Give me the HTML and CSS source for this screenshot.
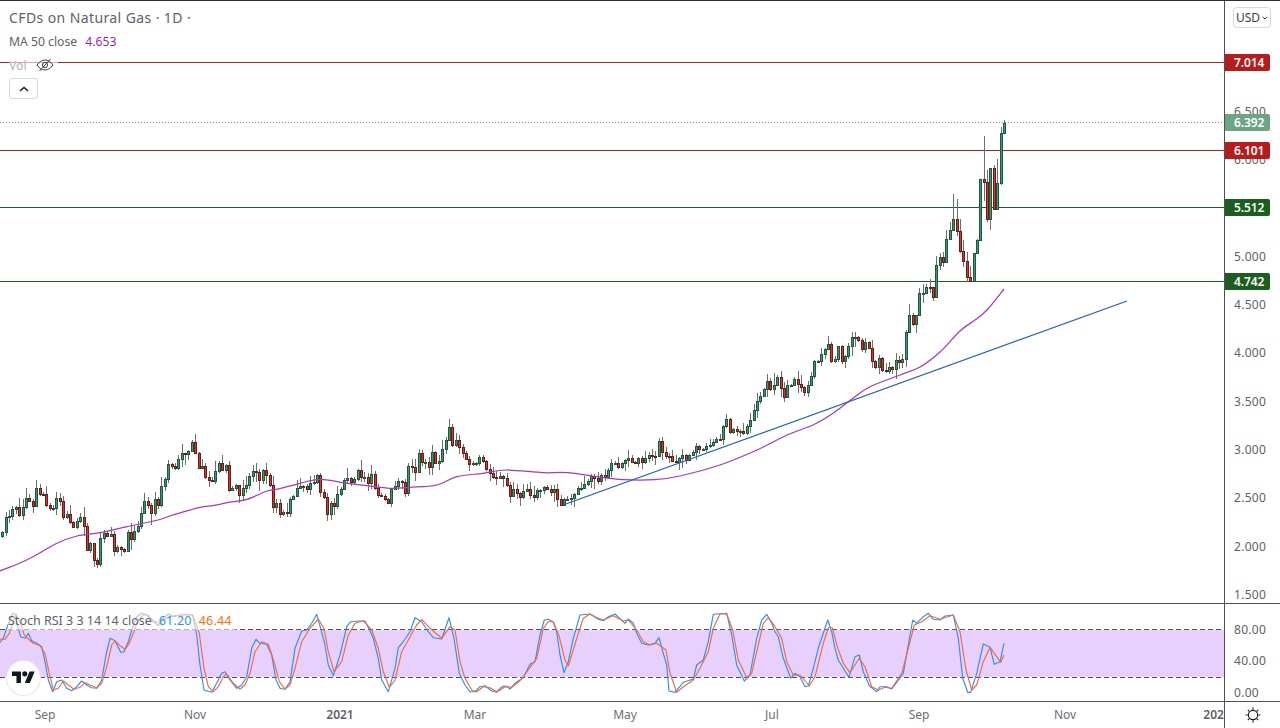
FILE: index.html
```html
<!DOCTYPE html>
<html lang="en">
<head>
<meta charset="utf-8">
<title>CFDs on Natural Gas · 1D</title>
<link rel="stylesheet" href="styles.css">
</head>
<body>
<div class="chart">
  <section class="pane pane-main">
    <svg class="plot" id="main-plot" viewBox="0 1 1224 602" width="1224" height="602" aria-label="Price chart">
      <line class="hline hline-red" x1="0" x2="1224" y1="62.5" y2="62.5"/>
      <line class="hline hline-red" x1="0" x2="1224" y1="150.5" y2="150.5"/>
      <line class="hline hline-green" x1="0" x2="1224" y1="207.5" y2="207.5"/>
      <line class="hline hline-green" x1="0" x2="1224" y1="281.5" y2="281.5"/>
      <line class="last-price" x1="0" x2="1224" y1="122.5" y2="122.5"/>
      <g id="candles"></g>
      <path class="ma" id="ma-line" d=""/>
      <line class="trend" x1="563" y1="505" x2="1127" y2="301"/>
    </svg>
    <div class="legend">
      <div class="legend-title">CFDs on Natural Gas · 1D ·</div>
      <div class="legend-row"><span>MA 50 close</span><span class="val-ma">4.653</span></div>
      <div class="legend-row legend-vol">
        <span>Vol</span>
        <svg class="eye" viewBox="0 0 18 14" width="18" height="14" aria-hidden="true">
          <path d="M1 7c2-3 5-5 8-5s6 2 8 5c-2 3-5 5-8 5S3 10 1 7z"/>
          <circle cx="9" cy="7" r="2.6"/>
          <path d="M3.5 13 14.5 1"/>
        </svg>
      </div>
      <button class="collapse" type="button" aria-label="Collapse legend">
        <svg viewBox="0 0 10 6" width="10" height="6" aria-hidden="true"><path d="M1 5l4-3.5L9 5"/></svg>
      </button>
    </div>
  </section>
  <aside class="scale scale-main">
    <button class="currency" type="button">USD<svg viewBox="0 0 6 4" width="6" height="4" aria-hidden="true"><path d="M.7.8 3 3 5.3.8"/></svg></button>
    <ul class="ticks">
      <li>6.500</li><li>6.000</li><li>5.500</li><li>5.000</li><li>4.500</li>
      <li>4.000</li><li>3.500</li><li>3.000</li><li>2.500</li><li>2.000</li><li>1.500</li>
    </ul>
    <span class="tag tag-red tag-7014">7.014</span>
    <span class="tag tag-last tag-6392">6.392</span>
    <span class="tag tag-red tag-6101">6.101</span>
    <span class="tag tag-green tag-5512">5.512</span>
    <span class="tag tag-green tag-4742">4.742</span>
  </aside>

  <section class="pane pane-osc">
    <svg class="plot" viewBox="0 604 1224 97" width="1224" height="97" aria-label="Stochastic RSI">
      <rect class="band" x="0" y="630" width="1224" height="47"/>
      <line class="guide" x1="0" x2="1224" y1="629.5" y2="629.5"/>
      <line class="guide" x1="0" x2="1224" y1="677.5" y2="677.5"/>
      <polyline class="stoch stoch-k" id="stoch-k" points=""/>
      <polyline class="stoch stoch-d" id="stoch-d" points=""/>
    </svg>
    <div class="osc-legend"><span>Stoch RSI 3 3 14 14 close</span><span class="val-k">61.20</span><span class="val-d">46.44</span></div>
    <div class="logo">
      <svg viewBox="0 0 36 28" width="23" height="18" aria-hidden="true">
        <path d="M14 22H7V11H0V4h14v18zM28 22h-8l7.5-18h8L28 22z"/>
        <circle cx="20" cy="7.5" r="4"/>
      </svg>
    </div>
  </section>
  <aside class="scale scale-osc">
    <ul class="ticks-osc"><li>80.00</li><li>40.00</li><li>0.00</li></ul>
  </aside>

  <footer class="time-axis">
    <span>Sep</span><span>Nov</span><span class="strong">2021</span><span>Mar</span><span>May</span><span>Jul</span><span>Sep</span><span>Nov</span><span class="strong">2022</span>
  </footer>
  <div class="settings">
    <svg viewBox="0 0 16 16" width="16" height="16" aria-hidden="true">
      <circle cx="8" cy="8" r="4.6"/>
      <path d="M8 .6v2.2M8 13.2v2.2M.6 8h2.2M13.2 8h2.2M2.8 2.8l1.5 1.5M11.7 11.7l1.5 1.5M13.2 2.8l-1.5 1.5M4.3 11.7l-1.5 1.5"/>
    </svg>
  </div>
</div>
<script src="chart.js"></script>
</body>
</html>
```
FILE: styles.css
```css
* { box-sizing: border-box; }
html, body { margin: 0; padding: 0; background: #fff; }
body {
  width: 1280px;
  height: 728px;
  overflow: hidden;
  font-family: "Noto Sans", "Open Sans", sans-serif;
  color: #5d606b;
}
ul { list-style: none; margin: 0; padding: 0; }

.chart {
  display: grid;
  grid-template-columns: 1224px 56px;
  grid-template-rows: 602px 97px 26px;
  row-gap: 1px;
  width: 1280px;
  height: 728px;
  border-top: 1px solid #2a2e39;
  background: #505050;
}

.pane { position: relative; overflow: hidden; background: #fff; }
.plot { display: block; }

.hline { stroke-width: 1; shape-rendering: crispEdges; }
.hline-red { stroke: #b71c1c; }
.hline-green { stroke: #1b5e20; }
.last-price { stroke: #6ba583; stroke-width: 1; stroke-dasharray: 1 2; shape-rendering: crispEdges; }
.trend { stroke: #1f5fbf; stroke-width: 1.2; }
.ma { fill: none; stroke: #a63ab8; stroke-width: 1.25; }

.wick { stroke: #6e6e6e; stroke-width: 1; shape-rendering: crispEdges; }
.body { stroke-width: 1; shape-rendering: crispEdges; }
.up { fill: #3d9970; stroke: #1d5a3c; }
.down { fill: #d9362b; stroke: #6e1a15; }

.legend {
  position: absolute;
  left: 9px;
  top: 7px;
  display: flex;
  flex-direction: column;
  align-items: flex-start;
}
.legend-title { font-size: 14px; line-height: 19px; height: 20px; letter-spacing: .4px; color: #5d606b; }
.legend-row {
  display: flex;
  align-items: center;
  gap: 8px;
  margin-top: 4px;
  font-size: 12.2px;
  line-height: 17px;
  height: 18px;
}
.val-ma { color: #9c27b0; }
.legend-vol {
  margin-top: 6px;
  color: #b2b5be;
  background: rgba(255, 255, 255, .6);
  gap: 9px;
  padding-right: 4px;
}
.eye { fill: none; stroke: #3b3e48; stroke-width: 1; }
.collapse {
  margin-top: 4px;
  width: 29px;
  height: 21px;
  padding: 0;
  display: flex;
  align-items: center;
  justify-content: center;
  border: 1px solid #d6d8e0;
  border-radius: 3px;
  background: #fff;
}
.collapse svg { fill: none; stroke: #131722; stroke-width: 1.4; }

.scale { position: relative; border-left: 1px solid #505050; overflow: hidden; background: #fff; }
.currency {
  position: absolute;
  left: 8px;
  top: 6px;
  width: 38px;
  height: 21px;
  padding: 0;
  display: flex;
  align-items: center;
  justify-content: center;
  gap: 2px;
  border: 1px solid #d6d8e0;
  border-radius: 4px;
  background: #fff;
  font: 12px "Noto Sans", sans-serif;
  color: #3b3e48;
}
.currency svg { fill: none; stroke: #3b3e48; stroke-width: 1; }
.ticks { padding: 87px 0 0 9px; font-size: 12px; color: #5d606b; }
.ticks li { height: 48.3px; line-height: 48.3px; letter-spacing: .3px; }

.tag {
  position: absolute;
  left: 0;
  width: 45px;
  height: 17px;
  line-height: 18px;
  padding-left: 9px;
  border-radius: 0 2px 2px 0;
  font-size: 12px;
  font-weight: 600;
  color: #fff;
  letter-spacing: -.1px;
}
.tag-red { background: #b71c1c; }
.tag-green { background: #1b5e20; }
.tag-last { background: #6ba583; }
.tag-7014 { top: 53px; }
.tag-6392 { top: 113px; }
.tag-6101 { top: 141px; }
.tag-5512 { top: 198px; }
.tag-4742 { top: 272px; }

.band { fill: #e8d0fc; }
.guide { stroke: #555; stroke-width: 1; stroke-dasharray: 5 3; shape-rendering: crispEdges; }
.stoch { fill: none; stroke-width: 1.15; stroke-linejoin: round; }
.stoch-k { stroke: #2e8fee; }
.stoch-d { stroke: #f4693a; }

.osc-legend {
  position: absolute;
  left: 8px;
  top: 8px;
  display: flex;
  gap: 7px;
  height: 18px;
  line-height: 18px;
  font-size: 12.5px;
  padding-right: 4px;
  background: rgba(255, 255, 255, .55);
}
.val-k { color: #2196f3; letter-spacing: .2px; }
.val-d { color: #ff6d00; letter-spacing: .2px; }
.logo {
  position: absolute;
  left: 7px;
  top: 57px;
  width: 33px;
  height: 34px;
  display: flex;
  align-items: center;
  justify-content: center;
  border-radius: 50%;
  background: #fff;
  box-shadow: 0 0 0 1px #e6e7ec;
}
.logo svg { fill: #131722; }

.ticks-osc { padding: 17px 0 0 9px; font-size: 12px; color: #5d606b; }
.ticks-osc li { height: 31px; line-height: 17px; letter-spacing: .3px; }
.ticks-osc li:nth-child(2) { height: 32px; }

.time-axis {
  display: grid;
  grid-template-columns: 90px 210px 80px 190px 110px 184px 110px 182px 122px;
  overflow: hidden;
  font-size: 12px;
  line-height: 26px;
  color: #6a6d78;
  white-space: nowrap;
  background: #fff;
}
.time-axis span { text-align: center; }
.time-axis .strong { font-weight: 600; color: #5d606b; }
.settings {
  display: flex;
  align-items: center;
  justify-content: center;
  border-left: 1px solid #505050;
  background: #fff;
}
.settings svg { fill: none; stroke: #131722; stroke-width: 1.1; }
```
FILE: chart.js
```js
// Bars are listed as closes, each opening at the previous close.
// A bar is a close, or [close, high, low]. Every run of bars is [top, values],
// where a value v maps to the pixel row top + v / 3.
const START_Y = 430 + 317 / 3;
const BAR_STEP = 3.384;
const FIRST_X = 2.3;

const runs = [
  [430, [305, 262, 258, 238, 232, 254, 230, 205, 212, 227, 175, 191, 193, 224, 233, 233, 205, 212, 262, 253, 276, 292, 274, 260, 287, 361, 340, [391, 340, 410], [401, 385, 415], 325, 310, 317, 311, 364, 350, 358, 364, 305, 328, 302, 287, 250, [214, 190, 250], 226, 248, 208, 226, 169, 146, 103, 109, 115, 88, 70, [73, 70, 105], 62, [37, 30, 62], 70, 115, 109, 142, 150, 152, 124, 100, [119, 75, 119], 106, 181, 175, 166, [196, 166, 218], 175, 164, 139, 124, 127, 149, 121, 136, 166, 232, 220, 253, 247, 250, 208, 199, 175]],
  [410, [228, 228, 236, 218, 216, 195, 245, 262, 312, 280, 287, 252, 238, 211, 205, 215, 208, 180, [200, 150, 215], 200, 218, 193, 233, 254, 257, 266, 278, 238, 229, 214, 215, 250, 168, 172, 185, [129, 118, 185], 155, 155, 172, [127, 105, 195], 160, 152, 118, 91, [52, 27, 91], 104, 91, 112, 130, 148, 161, 160, 160, 142, 154, 176, 190, 202, 205, 197, 203, 224, 257, 238, 250, 262, 244, 238, 256, 260, 241, 241, 232, 238, 245, 236, 268, 284, 268, 267, 264, 253, 235, 235, 223, 214, 199, 203, 212]],
  [320, [465, 472, 450, 429, 428, 441, 430, 421, 414, 425, 428, 415, 425, 415, 406, 407, 408, [363, 353, 409], 395, 407, 409, 423, 426, 414, 406, 421, 406, 396, 379, 387, 387, 378, 376, 367, 357, 358, 319, 297, 335, 328, 334, 333, 338, 319, 300, 271, 244, 229, 208, [183, 162, 230], 206, [196, 160, 225], 172, 203, 230, 196, 196, 178, 193, 200, 215, 196, 169, 124, 124, 102, 88, [72, 48, 88], 122, 116, [79, 79, 125], 122, 108, 79, 52, [52, 37, 80], 59, 86, 67, 84, 124, 142, 115, 149, 152, 140, 146, 121, 127]],
  [280, [238, 155, [105, 72, 160], 133, [105, 105, 160], [40, 25, 107], [40, 13, 68], [22, 13, 40]]],
  [110, [[532, 507, 550], [560, 530, 572], [466, 438, 562], [442, 430, 480], [455, 425, 470], [388, 360, 455], [361, 335, 390], [328, 252, 361], [364, 267, 378], [424, 327, 430], [454, 390, 470], [500, 425, 517], [512, 468, 515], [430, 428, 515], [391, 388, 430], [208, 208, 392], [215, 78, 272], [326, 180, 335], [175, 175, 360], [298, 165, 300], [220, 148, 300], [70, 52, 225], [38, 30, 72]]],
];

const maPoints = [
  [0, 571], [20, 563], [33, 556.7], [57, 543.3], [77, 536], [100, 532.7], [127, 526.7], [158, 520], [173, 515], [200, 507.3], [213, 505.7], [227, 502.7], [247, 499.3], [267, 491], [280, 488.7], [300, 483.3],
  [320, 479.3], [343, 482.7], [367, 485.7], [390, 488.3], [410, 487.3], [437, 485], [457, 476.7], [483, 473.3], [507, 470], [543, 472.7], [567, 472.7], [597, 476.7],
  [623, 479.7], [655, 479.7], [680, 476], [720, 465], [757, 450], [787, 435], [813, 425], [833, 413.3], [853, 398.3], [870, 386.7], [900, 375],
  [920, 367], [940, 352], [960, 331], [975, 320], [987, 310], [1004, 289],
];

const k1 = [[0,112],[10,100],[20,70],[30,45],[38,25],[45,27],[52,60],[62,95],[75,100],[85,85],[95,107],[110,115],[125,125],[135,170],[145,225],[158,260],[170,230],[185,225],[200,250],[215,257],[230,245],[245,228],[260,240],[275,248],[290,250],[305,225],[318,150],[330,100],[345,107],[362,142],[372,140],[385,110],[395,75],[410,35],[425,25],[440,30],[455,45],[475,62],[490,40],[505,27],[520,35],[540,30],[560,28],[578,30],[590,90],[600,180],[612,255],[635,262],[650,235],[665,205],[675,200],[690,225],[710,250],[725,240],[740,215],[755,130],[768,103],[780,115],[800,118],[815,150],[828,225],[840,250],[855,253],[870,230],[885,130],[905,78],[920,75],[935,55],[950,28],[962,70],[975,120],[985,180],[1000,212],[1020,150],[1040,65],[1052,50],[1075,48],[1095,48],[1110,78],[1120,100],[1135,160],[1145,225],[1165,260],[1185,190],[1195,128],[1210,110],[1230,80],[1245,38],[1265,50],[1285,80],[1300,98],[1325,102],[1347,38],[1362,100],[1378,205],[1395,240],[1410,260],[1425,260],[1440,245],[1455,242],[1475,258],[1490,262],[1500,250]];
const d1 = [[0,102],[15,103],[28,85],[38,55],[48,28],[60,50],[72,88],[85,102],[100,115],[120,122],[135,145],[148,205],[160,255],[175,250],[190,228],[205,240],[222,253],[240,247],[255,233],[270,240],[290,248],[305,235],[320,185],[335,120],[345,108],[360,122],[375,133],[388,115],[400,85],[415,45],[430,30],[445,30],[460,48],[480,55],[500,38],[520,32],[550,30],[578,30],[598,85],[612,190],[625,245],[640,260],[655,245],[670,215],[680,207],[700,235],[720,252],[735,240],[750,205],[765,140],[785,110],[805,118],[822,170],[838,230],[855,252],[870,240],[885,190],[905,110],[930,70],[955,42],[972,70],[985,140],[1002,200],[1025,170],[1045,90],[1065,55],[1090,47],[1115,75],[1135,130],[1150,200],[1168,247],[1185,225],[1205,140],[1225,105],[1250,60],[1265,43],[1290,70],[1325,100],[1350,65],[1365,75],[1380,170],[1395,220],[1415,255],[1430,260],[1450,245],[1470,248],[1490,260],[1500,256]];
const k2 = [[0,250],[10,244],[20,244],[30,252],[45,235],[70,218],[90,178],[105,170],[120,90],[133,45],[145,43],[160,52],[170,80],[180,150],[192,203],[205,170],[220,100],[240,30],[270,27],[295,43],[310,47],[325,35],[345,27],[375,55],[385,42],[400,55],[410,85],[425,115],[445,120],[465,115],[477,98],[490,145],[500,180],[507,258],[525,262],[550,232],[580,222],[590,180],[610,165],[625,110],[640,28],[680,25],[695,90],[710,180],[733,228],[750,210],[770,100],[785,45],[800,28],[815,55],[825,80],[835,95],[850,160],[872,220],[885,205],[900,215],[915,245],[925,243],[940,190],[955,130],[983,45],[995,80],[1005,130],[1015,165],[1030,190],[1047,217],[1065,155],[1078,150],[1090,200],[1108,242],[1130,260],[1140,245],[1160,245],[1175,252],[1190,232],[1210,205],[1238,45],[1250,55],[1270,35],[1285,25],[1300,43],[1320,45],[1335,33],[1360,30],[1375,100],[1388,220],[1403,262],[1412,262],[1430,205],[1450,117],[1470,127],[1483,178],[1500,170],[1512,115]];
const d2 = [[0,256],[15,245],[35,247],[60,227],[85,195],[110,160],[130,70],[145,50],[160,50],[178,95],[195,165],[205,183],[215,150],[235,85],[250,40],[270,27],[285,35],[310,45],[340,32],[370,48],[385,45],[410,75],[430,110],[450,120],[470,115],[498,135],[510,205],[530,262],[550,245],[580,225],[600,190],[625,140],[640,70],[660,27],[680,27],[698,75],[715,165],[740,218],[755,205],[775,120],[790,55],[805,38],[825,65],[845,100],[860,170],[880,210],[900,210],[928,243],[945,215],[970,115],[985,68],[997,68],[1012,125],[1030,175],[1050,203],[1078,160],[1095,185],[1115,245],[1135,255],[1155,247],[1175,250],[1205,205],[1225,130],[1243,60],[1265,50],[1290,32],[1320,43],[1360,30],[1380,80],[1398,195],[1415,255],[1430,240],[1450,170],[1470,127],[1490,155],[1502,172],[1512,150]];

function drawCandles() {
  const group = document.getElementById("candles");
  let seed = 7;
  const rand = () => {
    seed = (seed * 16807) % 2147483647;
    return seed / 2147483647;
  };
  let open = START_Y;
  let index = 0;
  let markup = "";
  for (const [top, values] of runs) {
    for (const entry of values) {
      const bar = Array.isArray(entry) ? entry : [entry];
      const close = top + bar[0] / 3;
      const upper = Math.round(Math.min(open, close));
      const lower = Math.round(Math.max(open, close));
      const high = bar.length > 1 ? top + bar[1] / 3 : upper - 1 - rand() * rand() * 11;
      const low = bar.length > 1 ? top + bar[2] / 3 : lower + 1 + rand() * rand() * 11;
      const x = Math.round(FIRST_X + index * BAR_STEP);
      const dir = close <= open ? "up" : "down";
      markup += `<line class="wick" x1="${x + 0.5}" x2="${x + 0.5}" y1="${Math.round(high)}" y2="${Math.round(low)}"/>`;
      markup += `<rect class="body ${dir}" x="${x - 0.5}" y="${upper + 0.5}" width="2" height="${Math.max(lower - upper, 1)}"/>`;
      open = close;
      index += 1;
    }
  }
  group.innerHTML = markup;
}

// Catmull-Rom through the points, so the moving average reads as a curve.
function smoothPath(points) {
  let d = `M${points[0][0]} ${points[0][1]}`;
  for (let i = 0; i < points.length - 1; i += 1) {
    const p0 = points[Math.max(i - 1, 0)];
    const p1 = points[i];
    const p2 = points[i + 1];
    const p3 = points[Math.min(i + 2, points.length - 1)];
    const c1x = p1[0] + (p2[0] - p0[0]) / 6;
    const c1y = p1[1] + (p2[1] - p0[1]) / 6;
    const c2x = p2[0] - (p3[0] - p1[0]) / 6;
    const c2y = p2[1] - (p3[1] - p1[1]) / 6;
    d += `C${c1x.toFixed(1)} ${c1y.toFixed(1)} ${c2x.toFixed(1)} ${c2y.toFixed(1)} ${p2[0]} ${p2[1]}`;
  }
  return d;
}

function toPoints(list) {
  return list.map(([x, y]) => `${x},${y}`).join(" ");
}

function zoomed(list, left, top) {
  return list.map(([x, y]) => [+(left + x / 3).toFixed(1), +(top + y / 3).toFixed(1)]);
}

drawCandles();
document.getElementById("ma-line").setAttribute("d", smoothPath(maPoints));
document.getElementById("stoch-k").setAttribute("points", toPoints([...zoomed(k1, 0, 605), ...zoomed(k2, 500, 605)]));
document.getElementById("stoch-d").setAttribute("points", toPoints([...zoomed(d1, 0, 605), ...zoomed(d2, 500, 605)]));
```
